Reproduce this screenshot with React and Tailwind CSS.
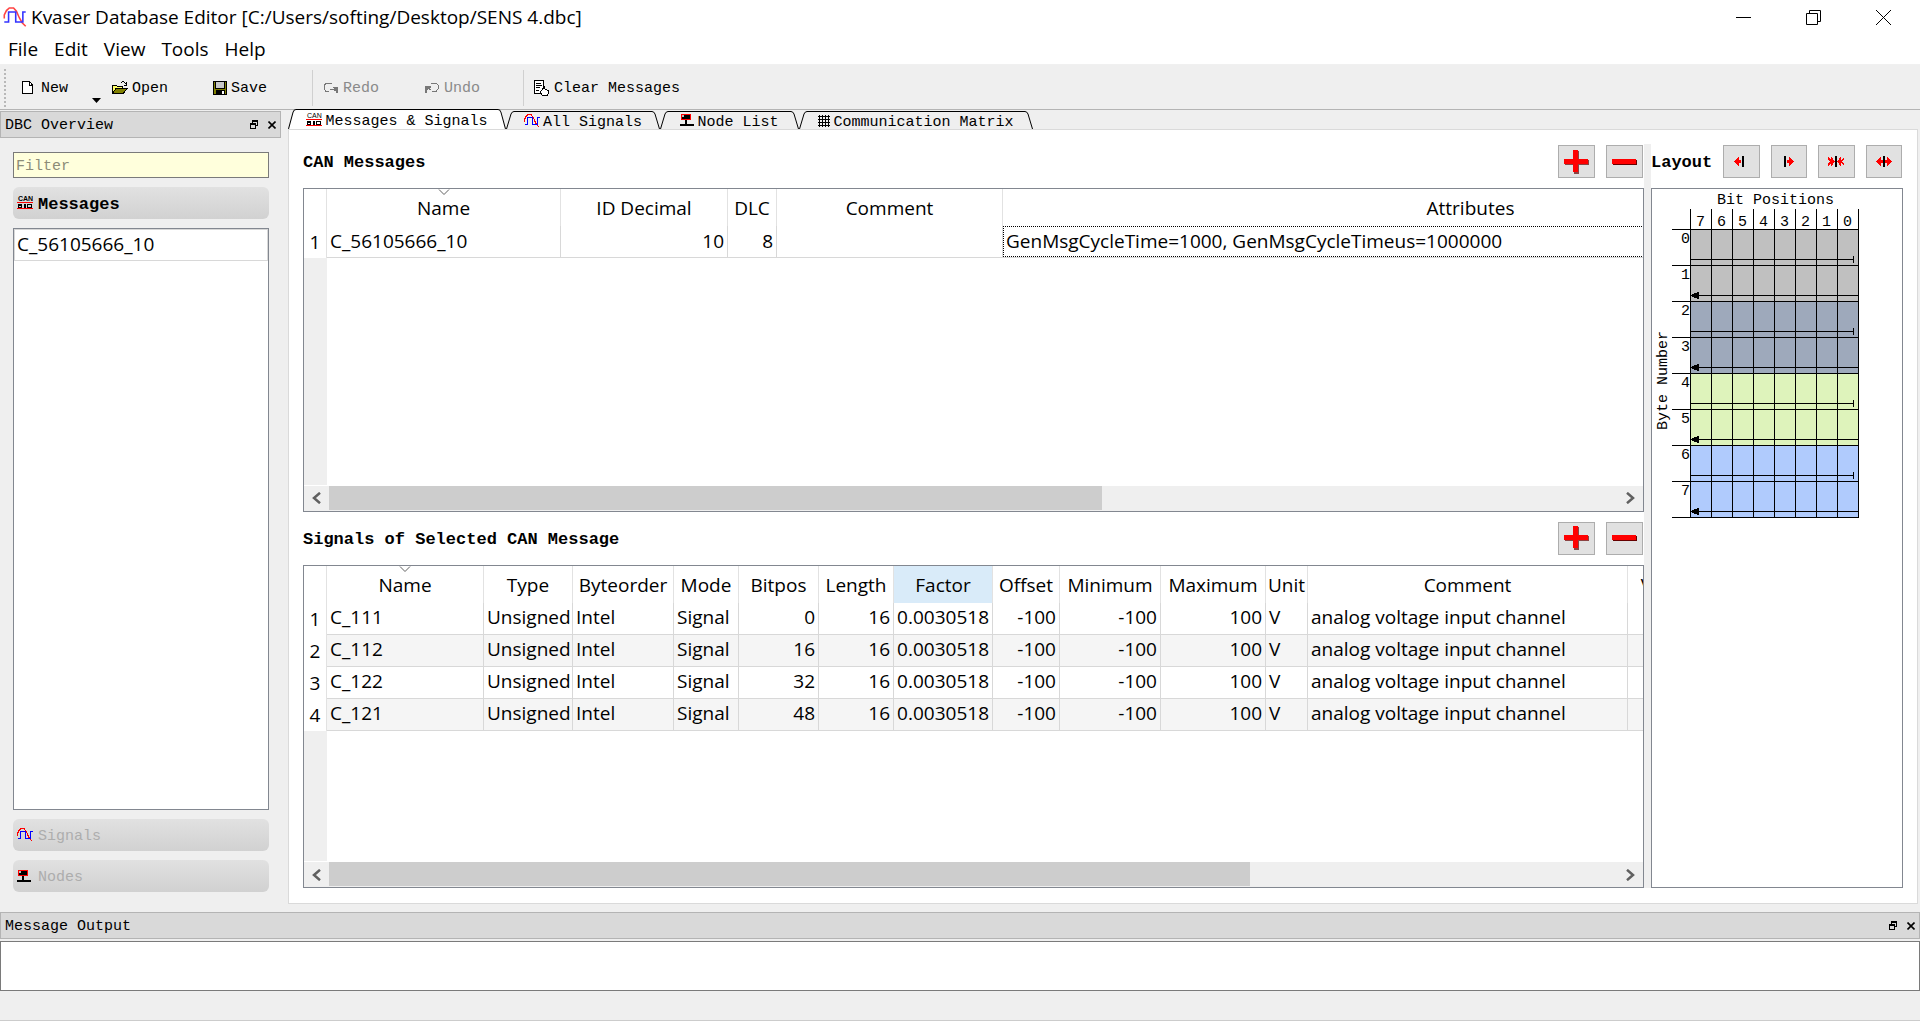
import React, { useState } from 'react';
import clsx from 'clsx';

const menus = ['File', 'Edit', 'View', 'Tools', 'Help'];

const messageColumns = [
    { name: 'Name', width: 'w-[234px]', sorted: true },
    { name: 'ID Decimal', width: 'w-[167px]', right: true },
    { name: 'DLC', width: 'w-[49px]', right: true },
    { name: 'Comment', width: 'w-[226px]' },
    { name: 'Attributes', width: 'w-[936px]', focused: true },
];

const messageRows = [
    ['C_56105666_10', '10', '8', '', 'GenMsgCycleTime=1000, GenMsgCycleTimeus=1000000'],
];

const signalColumns = [
    { name: 'Name', width: 'w-[157px]', sorted: true },
    { name: 'Type', width: 'w-[89px]' },
    { name: 'Byteorder', width: 'w-[101px]' },
    { name: 'Mode', width: 'w-[65px]' },
    { name: 'Bitpos', width: 'w-[80px]', right: true },
    { name: 'Length', width: 'w-[75px]', right: true },
    { name: 'Factor', width: 'w-[99px]', right: true, active: true },
    { name: 'Offset', width: 'w-[67px]', right: true },
    { name: 'Minimum', width: 'w-[101px]', right: true },
    { name: 'Maximum', width: 'w-[105px]', right: true },
    { name: 'Unit', width: 'w-[42px]' },
    { name: 'Comment', width: 'w-[320px]' },
    { name: 'V', width: 'w-[38px]' },
];

const signalRow = (name, bitpos) => [
    name, 'Unsigned', 'Intel', 'Signal', bitpos, '16', '0.0030518',
    '-100', '-100', '100', 'V', 'analog voltage input channel', '',
];

const signalRows = [
    signalRow('C_111', '0'),
    signalRow('C_112', '16'),
    signalRow('C_122', '32'),
    signalRow('C_121', '48'),
];

/* ---------- icons ---------- */

const SignalIcon = ({ className = 'w-4 h-[14px]', smooth }) => (
    <svg viewBox="0 0 16 14" className={className} fill="none" shapeRendering={smooth ? 'auto' : 'crispEdges'}>
        <path d="M.5 8V5.500L2 2.500 4 .7H7L9 3l2 4.500 2 3.500 2.500 2.500" stroke={smooth ? '#f44' : '#f00'} strokeWidth="1.1" />
        <path d="M.5 10.500H3.500V3.500H8.500V10.500H13.500V3.500H15.500" stroke={smooth ? '#33f' : '#00f'} strokeWidth="1.1" />
    </svg>
);

const CanIcon = () => (
    <svg viewBox="0 0 16 14" className="w-4 h-[14px] shrink-0">
        <text x="1" y="5" fontSize="7" fontFamily="Liberation Sans, sans-serif">CAN</text>
        <g fill="none" shapeRendering="crispEdges">
            <path d="M0 6.500H16M0 12.500H16" stroke="#f00" />
            <path d="M1.500 8.500H4.500V11.500H1.500ZM2 9.500H4M7.500 8V12M10.500 8.500H14.500V11.500H10.500ZM8.500 8V12" stroke="#000" />
        </g>
    </svg>
);

const NodeIcon = () => (
    <svg viewBox="0 0 14 13" className="w-[14px] h-[13px] shrink-0" shapeRendering="crispEdges">
        <rect x="1" y="0" width="10" height="6" fill="#f00" />
        <rect x="2" y="1" width="8" height="4" fill="#000" />
        <rect x="2" y="1" width="2" height="2" fill="#bbb" />
        <path d="M5 6H7V10H14V12H0V10H5Z" fill="#000" />
    </svg>
);

const MatrixIcon = () => (
    <svg viewBox="0 0 12 12" className="w-3 h-3 shrink-0" shapeRendering="crispEdges">
        <path d="M1.500 0V12M4.500 0V12M7.500 0V12M10.500 0V12M0 1.500H12M0 4.500H12M0 7.500H12M0 10.500H12" stroke="#000" />
    </svg>
);

const NewIcon = () => (
    <svg viewBox="0 0 12 14" className="w-3 h-[14px]" shapeRendering="crispEdges">
        <path d="M.5 .5H7.500L10.500 4V12.500H.5Z" fill="#fff" stroke="#000" />
        <path d="M7.500 .5V4H10.500" fill="none" stroke="#000" />
    </svg>
);

const OpenIcon = () => (
    <svg viewBox="0 0 16 14" className="w-4 h-[14px]" shapeRendering="crispEdges">
        <path d="M.5 12.500V4.500H4.500L5.500 5.500H10.500V8" fill="#ff6" stroke="#000" />
        <path d="M.5 12.500L4 7.500H15.500L11 12.500Z" fill="#808000" stroke="#000" />
        <path d="M8.500 2.500L10 .8H12L14.500 3.500M14.500 1V4H12" fill="none" stroke="#000" />
    </svg>
);

const SaveIcon = () => (
    <svg viewBox="0 0 14 14" className="w-[14px] h-[14px]" shapeRendering="crispEdges">
        <rect x=".5" y=".5" width="13" height="13" fill="#808000" stroke="#000" />
        <rect x="3" y="1" width="8" height="6" fill="#c8c8c8" />
        <path d="M2.500 1V7.500H11.500V1" fill="none" stroke="#000" />
        <rect x="3" y="9" width="9" height="5" fill="#000" />
        <rect x="9" y="10" width="2" height="3" fill="#fff" />
    </svg>
);

const RedoIcon = () => (
    <svg viewBox="0 0 16 12" className="w-4 h-3" shapeRendering="crispEdges">
        <path d="M9.500 2.500L8 1H3.500L1 3.500V7L3 9.500H6" fill="none" stroke="#777" />
        <path d="M9 5H14.500V11H12.500V9L10 8H7V6.500H10.500Z" fill="#777" />
    </svg>
);

const UndoIcon = () => (
    <svg viewBox="0 0 16 12" className="w-4 h-3" shapeRendering="crispEdges">
        <path d="M6.500 2.500L8 1H12L14.500 3.500V6.500L12 9.500H7.500" fill="none" stroke="#777" />
        <path d="M1 4H7V5.500H5.500L7 8H5.500L4 7 2.500 8.500V11H1Z" fill="#777" />
    </svg>
);

const ClearIcon = () => (
    <svg viewBox="0 0 16 16" className="w-4 h-4" shapeRendering="crispEdges">
        <path d="M9.500 6V.5H.5V13.500H7" fill="#fff" stroke="#000" />
        <path d="M2 3.500H7M2 5.500H8M2 7.500H6M2 10.500H5" stroke="#000" />
        <path d="M8.500 15.500L6.500 12 9 8.500 10 6.500 11 9 14 10.500 15 13 13 15.500Z" fill="#fff" stroke="#000" />
    </svg>
);

const PlusIcon = () => (
    <svg viewBox="1 0 26 24" className="w-[26px] h-6" shapeRendering="crispEdges">
        <path d="M11 1H16V10H26V15H16V24H11V15H2V10H11Z" fill="#600" opacity=".7" />
        <path d="M10 0H15V9H25V14H15V22H10V14H1V9H10Z" fill="#f00" />
    </svg>
);

const MinusIcon = () => (
    <svg viewBox="1 0 26 24" className="w-[26px] h-6" shapeRendering="crispEdges">
        <rect x="2" y="10" width="24" height="5" fill="#600" />
        <rect x="1" y="9" width="24" height="5" fill="#f00" />
    </svg>
);

const layoutIcons = [
    { label: 'Move left', arrows: 'M1 5.500L6 .5V4H8V7H6V10.500Z', bar: 9 },
    { label: 'Move right', arrows: 'M13 5.500L8 .5V4H6V7H8V10.500Z', bar: 3 },
    { label: 'Narrower', arrows: 'M7 5.500L3 .5V4L0 1V3L2 5.500 0 8V10L3 7V10.500ZM9 5.500L13 .5V4L16 1V3L14 5.500 16 8V10L13 7V10.500Z', bar: 7 },
    { label: 'Wider', arrows: 'M0 5.500L5 .5V4H7V7H5V10.500ZM16 5.500L11 .5V4H9V7H11V10.500Z', bar: 7 },
];

/* ---------- small controls ---------- */

const ToolButton = ({ icon, children, disabled, className }) => (
    <button type="button" disabled={disabled} className={clsx('flex items-center gap-1 whitespace-nowrap', disabled && 'text-[#8a8a8a]', className)}>
        {icon}
        <span className="pt-[2px]">{children}</span>
    </button>
);

const PushButton = ({ label, children }) => (
    <button type="button" aria-label={label} className="flex h-[33px] w-[37px] items-center justify-center border border-[#adadad] bg-[#e1e1e1]">
        {children}
    </button>
);

const DockButtons = () => (
    <div className="flex items-center gap-[10px]">
        <button type="button" aria-label="Float">
            <svg viewBox="0 0 8 9" className="h-[9px] w-2" fill="none" stroke="#000" shapeRendering="crispEdges">
                <path d="M2.500 3V.5H7.500V5.500H6M2 1H8M0 4H6" />
                <rect x=".5" y="3.500" width="5" height="5" />
            </svg>
        </button>
        <button type="button" aria-label="Close">
            <svg viewBox="0 0 8 8" className="h-2 w-2" stroke="#000" strokeWidth="1.600">
                <path d="M.5 .5L7.500 7.500M7.500 .5L.5 7.500" />
            </svg>
        </button>
    </div>
);

const DockHeader = ({ children }) => (
    <div className="flex h-[27px] shrink-0 items-center justify-between border border-[#b4b4b4] bg-[#d9d9d9] pl-1 pr-1">
        <span className="pt-[3px]">{children}</span>
        <DockButtons />
    </div>
);

const SectionButton = ({ icon, children, active }) => (
    <button
        type="button"
        className={clsx(
            'flex h-8 shrink-0 items-center gap-1 rounded-md bg-linear-to-b from-[#e1e1e1] to-[#d1d1d1] pl-1',
            active ? 'text-[17px] font-bold text-black' : 'text-[#adadad]'
        )}
    >
        <span className="flex w-[17px] shrink-0">{icon}</span>
        <span className="pt-[3px]">{children}</span>
    </button>
);

const Tab = ({ icon, children, selected, width, onClick }) => {
    const fill = selected ? '#fff' : '#efefef';
    return (
        <button
            type="button"
            role="tab"
            aria-selected={selected}
            onClick={onClick}
            className={clsx('flex shrink-0', width, selected ? 'h-5' : 'h-[18px]')}
        >
            <svg viewBox="0 0 8 18" preserveAspectRatio="none" className="h-full w-2 shrink-0">
                <path d="M0 18L5 3Q6 .5 8 .5V18Z" fill={fill} />
                <path d="M.5 18L5 3Q6 .5 8 .5" fill="none" stroke="#000" />
            </svg>
            <span
                className={clsx(
                    'flex h-full flex-1 items-center justify-center gap-[3px] whitespace-nowrap border-t border-black leading-[17px]',
                    selected ? 'bg-white' : 'bg-[#efefef]'
                )}
            >
                {icon}
                <span className="pt-[3px]">{children}</span>
            </span>
            <svg viewBox="0 0 8 18" preserveAspectRatio="none" className="h-full w-2 shrink-0">
                <path d="M8 18L3 3Q2 .5 0 .5V18Z" fill={fill} />
                <path d="M7.500 18L3 3Q2 .5 0 .5" fill="none" stroke="#000" />
            </svg>
        </button>
    );
};

const ScrollBar = ({ thumb }) => (
    <div className="flex h-[25px] shrink-0 bg-[#efefef]">
        <button type="button" aria-label="Scroll left" className="flex w-[25px] items-center justify-center">
            <svg viewBox="0 0 9 12" className="h-3 w-[9px]" fill="none" stroke="#606060" strokeWidth="2.500">
                <path d="M8 .8L2 6 8 11.200" />
            </svg>
        </button>
        <div className="flex-1">
            <div className={clsx('h-6 bg-[#cdcdcd]', thumb)} />
        </div>
        <button type="button" aria-label="Scroll right" className="flex w-[25px] items-center justify-center">
            <svg viewBox="0 0 9 12" className="h-3 w-[9px]" fill="none" stroke="#606060" strokeWidth="2.500">
                <path d="M1 .8L7 6 1 11.200" />
            </svg>
        </button>
    </div>
);

const DataTable = ({ columns, rows, thumb }) => (
    <div className="flex min-h-0 flex-1 flex-col overflow-hidden border border-[#828790] bg-white">
        <div className="flex min-h-0 flex-1 flex-col overflow-hidden">
            <table className="w-0 table-fixed border-separate border-spacing-0 font-['Open_Sans','Noto_Sans',sans-serif] text-[19px] leading-6">
                <colgroup>
                    <col className="w-[23px]" />
                    {columns.map((col) => <col key={col.name} className={col.width} />)}
                </colgroup>
                <thead>
                    <tr className="h-[37px]">
                        <th className="border-r border-[#e2e2e2] p-0" />
                        {columns.map((col) => (
                            <th key={col.name} className={clsx('border-r border-[#e2e2e2] p-0 align-bottom font-normal', col.active && 'bg-[#d9ebf9]')}>
                                {col.sorted && (
                                    <svg viewBox="0 0 12 7" className="mx-auto h-[7px] w-3" fill="none" stroke="#606060">
                                        <path d="M1 .5L6 5.500 11 .5" />
                                    </svg>
                                )}
                                <div className="mb-[6px] flex justify-center">{col.name}</div>
                            </th>
                        ))}
                    </tr>
                </thead>
                <tbody>
                    {rows.map((row, i) => (
                        <tr key={row[0]} className="h-8">
                            <th scope="row" className="border-r border-[#e2e2e2] p-0 text-center font-normal">{i + 1}</th>
                            {row.map((value, c) => (
                                <td
                                    key={columns[c].name}
                                    className={clsx(
                                        'whitespace-nowrap border-b border-r border-[#d8d8d8] p-0',
                                        i % 2 === 1 && 'bg-[#f5f5f5]'
                                    )}
                                >
                                    <div
                                        className={clsx(
                                            'flex h-[31px] items-center pb-[2px]',
                                            columns[c].focused ? 'border border-dotted border-black px-[2px]' : 'px-[3px]',
                                            columns[c].right && 'justify-end'
                                        )}
                                    >
                                        {value}
                                    </div>
                                </td>
                            ))}
                        </tr>
                    ))}
                </tbody>
            </table>
            <div className="w-[23px] flex-1 bg-[#efefef]" />
        </div>
        <div className="h-px shrink-0" />
        <ScrollBar thumb={thumb} />
    </div>
);

const TableSection = ({ title, ...table }) => (
    <section className="flex min-h-0 flex-1 flex-col pt-px">
        <div className="mb-[10px] flex h-[33px] shrink-0 items-center gap-[11px] pr-px">
            <h2 className="flex-1 pt-[3px] text-[17px] font-bold">{title}</h2>
            <PushButton label="Add"><PlusIcon /></PushButton>
            <PushButton label="Remove"><MinusIcon /></PushButton>
        </div>
        <DataTable {...table} />
    </section>
);

// Bit layout of the selected message, two bytes per signal
const BitGrid = () => {
    const colors = ['#c0c0c0', '#9ea9bb', '#def3bb', '#b0cbfd'];
    const range = (n) => Array.from({ length: n }, (_, i) => i);
    return (
        <svg viewBox="0 0 250 340" className="h-[340px] w-[250px]" fontFamily="'Liberation Mono', monospace" fontSize="15" shapeRendering="crispEdges">
            <text x="65" y="15">Bit Positions</text>
            <text transform="translate(15 241) rotate(-90)">Byte Number</text>
            {colors.map((color, i) => (
                <rect key={color} x="38" y={40 + i * 72} width="168" height="72" fill={color} />
            ))}
            {range(9).map((i) => (
                <path key={i} d={`M${38.5 + i * 21} 20V328M20 ${40.5 + i * 36}H207`} stroke="#000" />
            ))}
            {range(8).map((i) => (
                <g key={i}>
                    <text x={44 + i * 21} y="37">{7 - i}</text>
                    <text x="29" y={54 + i * 36}>{i}</text>
                </g>
            ))}
            {colors.map((color, i) => (
                <g key={color} stroke="#000">
                    <path d={`M38 ${70.5 + i * 72}H202M201.500 ${67 + i * 72}V${74 + i * 72}`} />
                    <path d={`M38 ${106.5 + i * 72}H206`} />
                    <path d={`M39 ${106.5 + i * 72}L46 ${103.5 + i * 72}V${109.5 + i * 72}Z`} />
                </g>
            ))}
        </svg>
    );
};

const App = () => {
    const [tab, setTab] = useState('Messages & Signals');
    const tabs = [
        { name: 'Messages & Signals', icon: <CanIcon />, width: 'w-[218px]' },
        { name: 'All Signals', icon: <SignalIcon />, width: 'w-[154px]' },
        { name: 'Node List', icon: <NodeIcon />, width: 'w-[139px]' },
        { name: 'Communication Matrix', icon: <MatrixIcon />, width: 'w-[234px]' },
    ];

    return (
        <div className="flex h-screen flex-col overflow-hidden bg-[#efefef] font-['Liberation_Mono',monospace] text-[15px] leading-5 text-black">
            <header className="shrink-0 border-b border-[#f0f0f0] bg-white font-['Open_Sans','Noto_Sans',sans-serif] text-[19px]">
                <div className="flex h-[34px] items-center pl-[3px] pr-[2px]">
                    <SignalIcon className="h-5 w-6" smooth />
                    <h1 className="flex-1 pl-1">Kvaser Database Editor [C:/Users/softing/Desktop/SENS 4.dbc]</h1>
                    <button type="button" aria-label="Minimize" className="flex w-[70px] justify-center">
                        <svg viewBox="0 0 15 15" className="h-[15px] w-[15px]" stroke="#000"><path d="M0 7.500H15" /></svg>
                    </button>
                    <button type="button" aria-label="Restore" className="flex w-[70px] justify-center">
                        <svg viewBox="0 0 15 15" className="h-[15px] w-[15px]" fill="none" stroke="#000">
                            <path d="M.5 3.500H11.500V14.500H.5ZM3.500 3V.5H14.500V11.500H12" />
                        </svg>
                    </button>
                    <button type="button" aria-label="Close window" className="flex w-[70px] justify-center">
                        <svg viewBox="0 0 15 15" className="h-[15px] w-[15px]" stroke="#000"><path d="M0 0L15 15M15 0L0 15" /></svg>
                    </button>
                </div>
                <nav className="flex h-[30px] items-center">
                    {menus.map((menu) => (
                        <button key={menu} type="button" className="px-2">{menu}</button>
                    ))}
                </nav>
            </header>

            <div className="flex h-[45px] shrink-0 items-center border-b border-[#b4b4b4] pl-1 pt-px" role="toolbar">
                <div className="h-[38px] border-l-2 border-dotted border-[#b8b8b8]" />
                <ToolButton icon={<NewIcon />} className="ml-4 gap-[7px]">New</ToolButton>
                <button type="button" aria-label="New options" className="ml-6 self-end pb-[6px]">
                    <svg viewBox="0 0 9 5" className="h-[5px] w-[9px]"><path d="M0 0H9L4.500 5Z" /></svg>
                </button>
                <ToolButton icon={<OpenIcon />} className="ml-[11px]">Open</ToolButton>
                <ToolButton icon={<SaveIcon />} className="ml-[45px]">Save</ToolButton>
                <div className="ml-[45px] h-9 border-l border-[#d0d0d0]" />
                <ToolButton icon={<RedoIcon />} disabled className="ml-[10px]">Redo</ToolButton>
                <ToolButton icon={<UndoIcon />} disabled className="ml-[45px]">Undo</ToolButton>
                <div className="ml-[43px] h-9 border-l border-[#d0d0d0]" />
                <ToolButton icon={<ClearIcon />} className="ml-[10px]">Clear Messages</ToolButton>
            </div>

            <div className="flex min-h-0 flex-1">
                <aside className="flex w-[281px] shrink-0 flex-col pt-px">
                    <DockHeader>DBC Overview</DockHeader>
                    <div className="flex min-h-0 flex-1 flex-col gap-[9px] pb-5 pl-[13px] pr-3 pt-[14px]">
                        <input
                            aria-label="Filter"
                            placeholder="Filter"
                            className="h-[26px] shrink-0 border border-[#7a7a7a] bg-[#ffffdc] px-[2px] pt-[3px] placeholder:text-[#8c8c78]"
                        />
                        <SectionButton icon={<CanIcon />} active>Messages</SectionButton>
                        <ul className="min-h-0 flex-1 border border-[#828790] bg-white font-['Open_Sans','Noto_Sans',sans-serif] text-[19px]">
                            <li className="flex h-8 items-center border border-[#d8d8d8] px-[2px] pb-[2px]">C_56105666_10</li>
                        </ul>
                        <SectionButton icon={<SignalIcon />}>Signals</SectionButton>
                        <SectionButton icon={<NodeIcon />}>Nodes</SectionButton>
                    </div>
                </aside>

                <main className="ml-[7px] mr-[2px] flex min-w-0 flex-1 flex-col pb-2">
                    <div className="flex h-[19px] shrink-0 items-end" role="tablist">
                        {tabs.map((t) => (
                            <Tab key={t.name} icon={t.icon} width={t.width} selected={tab === t.name} onClick={() => setTab(t.name)}>
                                {t.name}
                            </Tab>
                        ))}
                    </div>
                    <div className="flex min-h-0 flex-1 border border-[#dadada] bg-white px-[14px] pb-[15px] pt-[14px]">
                        <div className="flex min-w-0 flex-1 flex-col gap-[9px]">
                            <TableSection title="CAN Messages" columns={messageColumns} rows={messageRows} thumb="w-3/5" />
                            <TableSection title="Signals of Selected CAN Message" columns={signalColumns} rows={signalRows} thumb="w-5/7" />
                        </div>
                        <div className="w-[7px] shrink-0 bg-[#efefef]" />
                        <section className="flex w-[252px] shrink-0 flex-col pt-px">
                            <div className="mb-[10px] flex h-[33px] shrink-0 items-center gap-[11px] pr-px">
                                <h2 className="flex-1 pt-[3px] text-[17px] font-bold">Layout</h2>
                                {layoutIcons.map(({ label, arrows, bar }) => (
                                    <PushButton key={label} label={label}>
                                        <svg viewBox="0 0 16 12" className="h-3 w-4" shapeRendering="crispEdges">
                                            <path d={arrows} fill="#f00" />
                                            <rect x={bar} y="0" width="2" height="11" />
                                        </svg>
                                    </PushButton>
                                ))}
                            </div>
                            <div className="min-h-0 flex-1 overflow-hidden border border-[#828790]">
                                <BitGrid />
                            </div>
                        </section>
                    </div>
                </main>
            </div>

            <DockHeader><label htmlFor="output">Message Output</label></DockHeader>
            <textarea id="output" readOnly className="mt-[2px] block h-[50px] w-full shrink-0 resize-none border border-[#7a7a7a] bg-white" />
            <footer className="h-[30px] shrink-0 border-b border-[#cccccc]" />
        </div>
    );
};

export default App;
